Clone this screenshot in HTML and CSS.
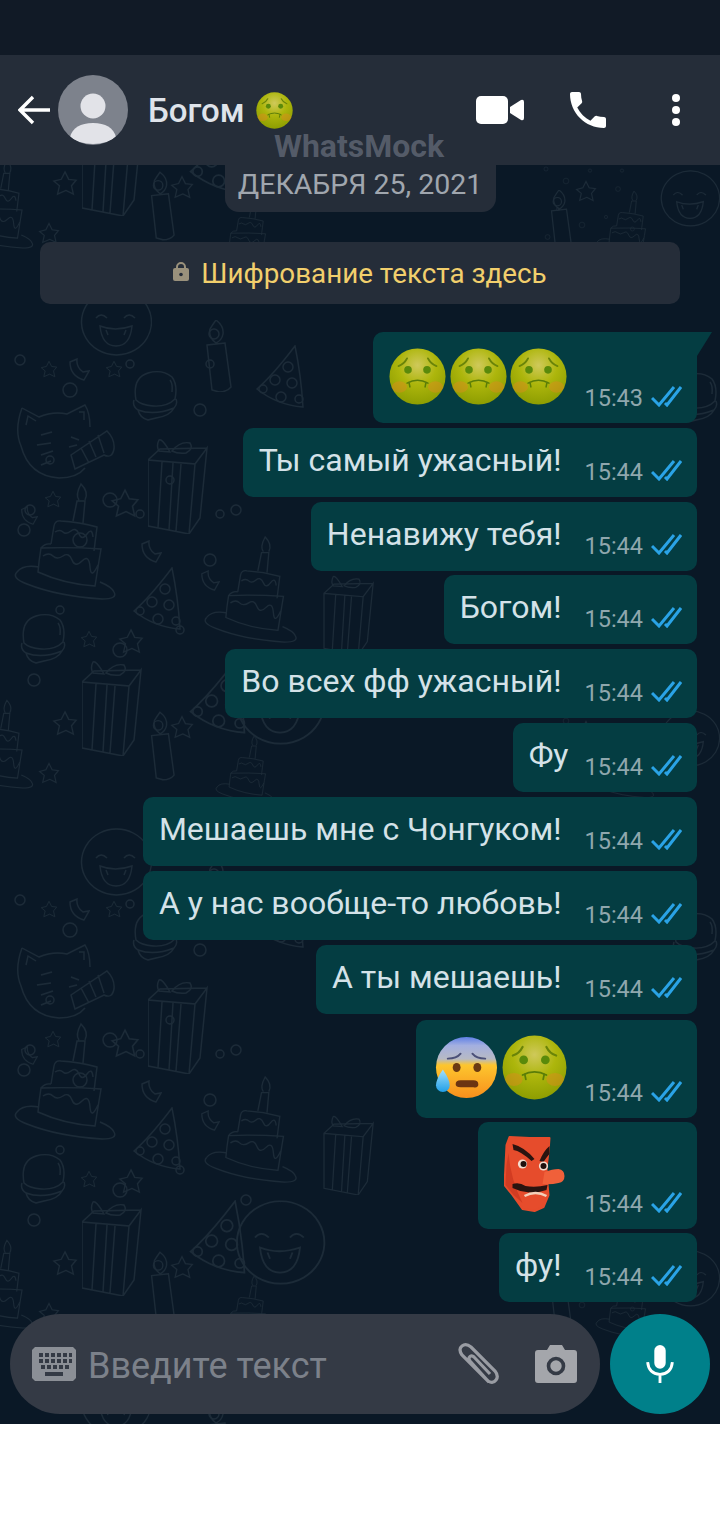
FILE: index.html
```html
<!DOCTYPE html>
<html lang="ru">
<head>
    <meta charset="UTF-8">
    <meta name="viewport" content="width=device-width, initial-scale=1.0">
    <title>WhatsMock</title>
    <link rel="stylesheet" href="styles.css">
</head>
<body>

<!-- Shared symbols -->
<svg class="defs" aria-hidden="true">
    <defs>
        <radialGradient id="sickSkin" cx="0.5" cy="0.3" r="0.75">
            <stop offset="0" stop-color="#cfc95a"/>
            <stop offset="0.45" stop-color="#adb60c"/>
            <stop offset="1" stop-color="#899a00"/>
        </radialGradient>
        <linearGradient id="fearSkin" x1="0" y1="0" x2="0" y2="1">
            <stop offset="0" stop-color="#5f80e6"/>
            <stop offset="0.14" stop-color="#a3afe0"/>
            <stop offset="0.36" stop-color="#b7bac4"/>
            <stop offset="0.46" stop-color="#fdc62e"/>
            <stop offset="1" stop-color="#f88f1c"/>
        </linearGradient>
        <linearGradient id="dropFill" x1="0" y1="0" x2="0" y2="1">
            <stop offset="0" stop-color="#a4e0fc"/>
            <stop offset="1" stop-color="#1f9fe8"/>
        </linearGradient>
        <symbol id="sick" viewBox="0 0 60 60">
            <circle cx="30" cy="30" r="29.500" fill="url(#sickSkin)"/>
            <ellipse cx="11" cy="41" rx="8" ry="6" fill="#e08a20" opacity="0.45"/>
            <ellipse cx="49" cy="41" rx="8" ry="6" fill="#e08a20" opacity="0.45"/>
            <circle cx="20" cy="23" r="4" fill="#5a8a0a"/>
            <circle cx="40" cy="23" r="4" fill="#5a8a0a"/>
            <path d="M10 19q6-2 9-8M50 19q-6-2-9-8" fill="none" stroke="#6a8408" stroke-width="2" stroke-linecap="round"/>
            <path d="M19 37q11-6 22 0M21 36l1 5M39 36l-1 5" fill="none" stroke="#5a7d08" stroke-width="1.600" stroke-linecap="round"/>
        </symbol>
        <symbol id="fear" viewBox="0 0 66 66">
            <circle cx="33" cy="33" r="31" fill="url(#fearSkin)"/>
            <path d="M14 24q9 0 13-5M52 24q-9 0-13-5" fill="none" stroke="#4b5078" stroke-width="2" stroke-linecap="round"/>
            <ellipse cx="23" cy="33" rx="4" ry="4.500" fill="#6b3a12"/>
            <ellipse cx="44" cy="33" rx="4" ry="4.500" fill="#6b3a12"/>
            <path d="M22 50q0-4 5-4h13q5 0 5 4t-5 3H27q-5 0-5-3z" fill="#6b3412"/>
            <path d="M9 35q7 10 7 16a7 7 0 0 1-14 0q0-6 7-16z" fill="url(#dropFill)"/>
        </symbol>
        <symbol id="tengu" viewBox="0 0 62 78">
            <path d="M5 2l20 1 20 0-1 14-2 16 1 16 1 11-5 12-9 4-12-2-10-14-8-10 1-20 1-20z" fill="#e64c2c" stroke="#e64c2c" stroke-width="2" stroke-linejoin="round"/>
            <path d="M4 18q2 26 14 50l-9-8-8-10 1-20z" fill="#d23c22"/>
            <path d="M40 37q8-3 14-3 6 1 6 7t-6 7q-8 2-16 1z" fill="#f0603a"/>
            <path d="M8 9q12 3 22 15l-3 2Q16 16 9 15zM45 11q-6 5-10 15l4 1q4-6 6-8z" fill="#2a1410"/>
            <circle cx="18" cy="29" r="4.600" fill="#f3ddcf"/><circle cx="19" cy="29" r="3" fill="#20110e"/>
            <circle cx="39" cy="31" r="4.600" fill="#f3ddcf"/><circle cx="39" cy="31" r="3" fill="#20110e"/>
            <path d="M8 49q7-2 13 2 10 2 22-1l-1 5q-12 4-20 2-8-1-14-4z" fill="#2a1410"/>
            <path d="M20 61q11-6 22 0" fill="none" stroke="#f3d0ba" stroke-width="2.400"/>
        </symbol>
        <symbol id="ticks" viewBox="0 0 31 21">
            <path d="M1 12l7 7L23 1M14 17l2 2L30 1" fill="none" stroke="#2aa3e6" stroke-width="3"/>
        </symbol>

        <!-- Wallpaper doodles -->
        <symbol id="dCake" viewBox="0 0 105 121">
            <path d="M4 90q-6 6 10 12 30 12 75 15 16 0 12-7-2-5-14-10M26 85Q10 82 4 90"/>
            <path d="M28 66q-2 12-3 24 26 12 57 14l4-25 2-12q-28-2-60-1zM28 66q4-5 10-4M30 74q6-4 10 0t10 0 9 4 10 1 8 6 8-2"/>
            <path d="M38 62l3-18q1-6 7-5 18 1 36 6l-3 24M42 50q5-3 8 0t8-1 8 3 8 0 6 3"/>
            <path d="M60 39l4-20h8l-2 22M66 18q-4-5 2-16 8 8 4 16"/>
        </symbol>
        <symbol id="dGift" viewBox="0 0 60 96">
            <path d="M0 22l47 4-6 70-41-8zM47 26l12-16-7 70-11 16M0 22l12-11 47-1M14 24l-4 66M25 25l-4 67M33 26l-5 67"/>
            <path d="M22 14q-8-14-11-12-3 6 0 11zM24 13q8-10 18-8 4 6-4 10-8 1-14-2z"/>
        </symbol>
        <symbol id="dHat" viewBox="0 0 50 64">
            <path d="M40 1Q18 30 2 44q20 16 46 18Q46 30 40 1z"/>
            <circle cx="33" cy="22" r="5"/><circle cx="20" cy="35" r="5"/><circle cx="37" cy="38" r="5"/><circle cx="26" cy="52" r="5"/><circle cx="44" cy="54" r="4"/><circle cx="8" cy="44" r="4"/>
        </symbol>
        <symbol id="dCat" viewBox="0 0 98 78">
            <path d="M5 5q-8 22-1 38 8 30 38 32 18 0 26-10M5 5l17 9q14-6 28-3l18-9q5 8 5 22M9 22l2-9 8 5M62 9l5 0 0 8"/>
            <path d="M24 32l11-3M20 42l14-2M24 52l12-4M24 62l10-4M54 34l8 3M52 44l8-2"/>
            <path d="M54 52l36-24q8 8 7 18-2 10-10 6L58 66zM64 45l8 15M72 38l7 16M81 32l6 18"/>
        </symbol>
        <symbol id="dBurger" viewBox="0 0 46 52">
            <path d="M4 30Q0 8 16 3q14-4 24 4 6 8 3 22-8 8-22 7-12-1-17-6zM2 30q-2 6 4 10 16 6 36-2 4-4 2-9M6 40q2 8 10 10l8-2q14-2 18-10"/>
            <path d="M38 10q3 4 2 12"/>
        </symbol>
        <symbol id="dCandle" viewBox="0 0 32 72">
            <path d="M7 25l18-2 6 44q-4 5-12 5l-7-2zM16 23q-8-6-6-14 3-5 6-9 8 6 7 14-1 6-7 9z"/><circle cx="14" cy="14" r="5"/>
        </symbol>
        <symbol id="dFace" viewBox="0 0 72 72">
            <path d="M36 1a35 33 0 1 0 1 0zM16 30q5-6 11 0M44 30q5-6 11 0M20 38q15 6 32 0-2 20-16 20T20 38zM26 42l2 5M46 42l-2 5"/>
        </symbol>
        <symbol id="dStar" viewBox="0 0 28 28">
            <path d="M14 2l4 8 8 1-5 6 2 9-8-4-9 4 2-9-6-5 8-2z"/>
        </symbol>
        <symbol id="dBit" viewBox="0 0 22 24">
            <path d="M2 4l7-3q-1 8 6 13l6-1-5 9Q2 18 2 4z"/>
        </symbol>
        <symbol id="dBits" viewBox="0 0 240 200">
            <circle cx="10" cy="10" r="5"/><circle cx="60" cy="40" r="7"/><circle cx="120" cy="14" r="4"/><circle cx="190" cy="60" r="6"/><circle cx="40" cy="110" r="4"/><circle cx="100" cy="150" r="7"/><circle cx="160" cy="130" r="4"/><circle cx="226" cy="160" r="5"/><circle cx="14" cy="180" r="6"/><circle cx="200" cy="14" r="4"/>
        </symbol>
        <pattern id="doodles" width="720" height="540" patternUnits="userSpaceOnUse">
            <g class="doodle" fill="none">
                <g id="tile" transform="translate(0 -165)">
                    <use href="#dFace" x="80" y="288" width="72" height="72"/>
                    <use href="#dCandle" x="200" y="320" width="32" height="72"/>
                    <use href="#dHat" x="255" y="345" width="50" height="64"/>
                    <use href="#dBurger" x="132" y="370" width="46" height="52"/>
                    <use href="#dCat" x="17" y="403" width="98" height="78"/>
                    <use href="#dGift" x="148" y="438" width="60" height="96"/>
                    <use href="#dCake" x="13" y="482" width="105" height="121"/>
                    <use href="#dCake" x="203" y="533" width="96" height="115"/>
                    <use href="#dHat" x="132" y="567" width="50" height="64"/>
                    <use href="#dBurger" x="20" y="613" width="46" height="52"/>
                    <use href="#dGift" x="318" y="575" width="62" height="80"/>
                    <use href="#dGift" x="82" y="660" width="60" height="96"/>
                    <use href="#dCandle" x="145" y="710" width="30" height="72"/>
                    <use href="#dCake" x="195" y="735" width="100" height="70"/>
                    <use href="#dCake" x="-45" y="690" width="80" height="110"/>
                    <use href="#dFace" x="655" y="170" width="70" height="60"/>
                    <use href="#dCandle" x="545" y="190" width="28" height="60"/>
                    <use href="#dCake" x="590" y="190" width="70" height="70"/>
                    <use href="#dHat" x="185" y="660" width="65" height="75"/>
                    <use href="#dFace" x="230" y="660" width="100" height="90"/>
                    <use href="#dBurger" x="672" y="372" width="46" height="52"/>
                    <use href="#dStar" x="38" y="762" width="22" height="22"/>
                    <use href="#dStar" x="52" y="710" width="26" height="26"/>
                    <use href="#dStar" x="170" y="175" width="24" height="24"/>
                    <use href="#dStar" x="575" y="180" width="22" height="22"/>
                    <use href="#dStar" x="40" y="360" width="18" height="18"/>
                    <use href="#dStar" x="105" y="360" width="18" height="18"/>
                    <use href="#dStar" x="110" y="488" width="30" height="30"/>
                    <use href="#dStar" x="44" y="490" width="18" height="18"/>
                    <use href="#dStar" x="80" y="630" width="18" height="18"/>
                    <use href="#dStar" x="118" y="628" width="26" height="26"/>
                    <use href="#dBit" x="68" y="358" width="22" height="24"/>
                    <use href="#dBit" x="20" y="505" width="18" height="22"/>
                    <use href="#dBit" x="140" y="540" width="22" height="24"/>
                    <use href="#dBit" x="200" y="570" width="20" height="22"/>
                    <use href="#dBits" x="10" y="350" width="240" height="200"/>
                    <use href="#dBits" x="20" y="500" width="240" height="200"/>
                    <use href="#dBits" x="470" y="165" width="240" height="80"/>
                </g>
                <use href="#tile" y="540"/>
                <use href="#tile" y="-540"/>
            </g>
        </pattern>
    </defs>
</svg>

<div class="phone">
    <div class="status-bar"></div>

    <!-- Header -->
    <div class="header">
        <svg class="back-icon" viewBox="0 0 32 30"><path d="M32 15H3M15 2L2 15l13 13" fill="none" stroke="#fff" stroke-width="3.400"/></svg>
        <div class="avatar">
            <svg viewBox="0 0 70 70"><circle cx="35" cy="31" r="12.500" fill="#e2e3e8"/><path d="M12 62q4-14 23-14t23 14q-9 7-23 7T12 62z" fill="#e2e3e8"/></svg>
        </div>
        <div class="contact-name">Богом</div>
        <svg class="name-emoji"><use href="#sick"/></svg>
        <div class="header-actions">
            <svg class="video-icon" viewBox="0 0 48 28"><rect width="32" height="28" rx="5" fill="#fff"/><path d="M34 11l11-7q3-1 3 2v16q0 3-3 2l-11-7z" fill="#fff"/></svg>
            <svg class="call-icon" viewBox="3 3 18 18"><path d="M6.620 10.790c1.440 2.830 3.760 5.140 6.590 6.590l2.200-2.200c.27-.27.67-.36 1.020-.24 1.120.37 2.330.57 3.570.57.55 0 1 .45 1 1V20c0 .55-.45 1-1 1-9.390 0-17-7.610-17-17 0-.55.45-1 1-1h3.500c.55 0 1 .45 1 1 0 1.250.2 2.450.57 3.570.11.35.03.74-.25 1.020l-2.200 2.200z" fill="#fff"/></svg>
            <svg class="menu-icon" viewBox="0 0 8 32"><circle cx="4" cy="4" r="4" fill="#fff"/><circle cx="4" cy="16" r="4" fill="#fff"/><circle cx="4" cy="28" r="4" fill="#fff"/></svg>
        </div>
    </div>
    <div class="watermark">WhatsMock</div>

    <!-- Chat -->
    <div class="chat">
        <svg class="wallpaper"><rect width="720" height="1260" fill="url(#doodles)"/></svg>

        <div class="date-chip">ДЕКАБРЯ 25, 2021</div>
        <div class="notice">
            <svg class="lock-icon" viewBox="0 0 16 20"><path d="M3 8V6a5 5 0 0 1 10 0v2h-2V6a3 3 0 0 0-6 0v2z" fill="#9a917c"/><rect y="7" width="16" height="13" rx="2" fill="#9a917c"/><circle cx="8" cy="13.500" r="1.800" fill="#252d39"/></svg>
            <span>Шифрование текста здесь</span>
        </div>

        <div class="msg msg-first msg-emoji">
            <div class="emoji-row"><svg class="emoji-s"><use href="#sick"/></svg><svg class="emoji-s"><use href="#sick"/></svg><svg class="emoji-s"><use href="#sick"/></svg></div>
            <div class="meta"><span class="time">15:43</span><svg class="ticks"><use href="#ticks"/></svg></div>
        </div>
        <div class="msg"><div class="msg-text">Ты самый ужасный!</div><div class="meta"><span class="time">15:44</span><svg class="ticks"><use href="#ticks"/></svg></div></div>
        <div class="msg"><div class="msg-text">Ненавижу тебя!</div><div class="meta"><span class="time">15:44</span><svg class="ticks"><use href="#ticks"/></svg></div></div>
        <div class="msg msg-tight"><div class="msg-text">Богом!</div><div class="meta"><span class="time">15:44</span><svg class="ticks"><use href="#ticks"/></svg></div></div>
        <div class="msg"><div class="msg-text">Во всех фф ужасный!</div><div class="meta"><span class="time">15:44</span><svg class="ticks"><use href="#ticks"/></svg></div></div>
        <div class="msg msg-short"><div class="msg-text">Фу</div><div class="meta"><span class="time">15:44</span><svg class="ticks"><use href="#ticks"/></svg></div></div>
        <div class="msg"><div class="msg-text">Мешаешь мне с Чонгуком!</div><div class="meta"><span class="time">15:44</span><svg class="ticks"><use href="#ticks"/></svg></div></div>
        <div class="msg"><div class="msg-text">А у нас вообще-то любовь!</div><div class="meta"><span class="time">15:44</span><svg class="ticks"><use href="#ticks"/></svg></div></div>
        <div class="msg"><div class="msg-text">А ты мешаешь!</div><div class="meta"><span class="time">15:44</span><svg class="ticks"><use href="#ticks"/></svg></div></div>
        <div class="msg msg-emoji msg-pair">
            <div class="emoji-row"><svg class="emoji-l"><use href="#fear"/></svg><svg class="emoji-l"><use href="#sick"/></svg></div>
            <div class="meta"><span class="time">15:44</span><svg class="ticks"><use href="#ticks"/></svg></div>
        </div>
        <div class="msg msg-tight msg-emoji msg-mask">
            <div class="emoji-row"><svg class="emoji-mask"><use href="#tengu"/></svg></div>
            <div class="meta"><span class="time">15:44</span><svg class="ticks"><use href="#ticks"/></svg></div>
        </div>
        <div class="msg msg-tight"><div class="msg-text">фу!</div><div class="meta"><span class="time">15:44</span><svg class="ticks"><use href="#ticks"/></svg></div></div>
    </div>

    <!-- Composer -->
    <div class="composer">
        <div class="input-pill">
            <svg class="keyboard-icon" viewBox="0 0 44 34">
                <path d="M3 0h38l3 3v28l-3 3H3l-3-3V3z" fill="#8b8f96"/>
                <path d="M7 6h4v4H7zM13 6h4v4h-4zM19 6h4v4h-4zM25 6h4v4h-4zM31 6h4v4h-4zM37 6h3v4h-3zM7 12h4v4H7zM13 12h4v4h-4zM19 12h4v4h-4zM25 12h4v4h-4zM31 12h4v4h-4zM37 12h3v4h-3zM9 18h4v4H9zM15 18h4v4h-4zM21 18h4v4h-4zM27 18h4v4h-4zM33 18h4v4h-4zM13 25h18v4H13z" fill="#343a45"/>
            </svg>
            <div class="placeholder">Введите текст</div>
            <svg class="clip-icon" viewBox="0 0 42 42"><path d="M32 39L5 12q-4-6 0-9t9 1l24 24q4 5 1 9t-8 1L13 18q-2-3 0-4.500t4 .5l16 17" fill="none" stroke="#999ca3" stroke-width="3.200"/></svg>
            <svg class="camera-icon" viewBox="0 0 42 38"><path d="M3 5h9l3-5h12l3 5h9q3 0 3 3v27q0 3-3 3H3q-3 0-3-3V8q0-3 3-3z" fill="#a4a6ab"/><circle cx="21" cy="21" r="7.500" fill="none" stroke="#343a45" stroke-width="3.600"/></svg>
        </div>
        <div class="mic-button">
            <svg viewBox="0 0 28 40"><rect x="8" width="12" height="25" rx="6" fill="#fff"/><path d="M1 18q1 12 13 13 12-1 13-13M14 31v9" fill="none" stroke="#fff" stroke-width="3"/></svg>
        </div>
    </div>
</div>

</body>
</html>
```

FILE: styles.css
```css
body {
    font-family: Roboto, "Noto Sans", sans-serif;
    margin: 0;
    padding: 0;
    background-color: #fff;
}
.defs {
    position: absolute;
    width: 0;
    height: 0;
}
.doodle {
    stroke: #1c2b38;
    stroke-width: 1.4;
}
.phone {
    position: relative;
    width: 720px;
    height: 1424px;
    display: flex;
    flex-direction: column;
    background-color: #0a1826;
    overflow: hidden;
}
.status-bar {
    height: 55px;
    background-color: #111a26;
}

/* Header */
.header {
    height: 110px;
    display: flex;
    align-items: center;
    padding-left: 18px;
    background-color: #252d39;
}
.back-icon {
    width: 32px;
    height: 30px;
}
.avatar {
    width: 70px;
    height: 70px;
    margin-left: 8px;
    border-radius: 50%;
    background-color: #7d828c;
    overflow: hidden;
}
.avatar svg {
    display: block;
}
.contact-name {
    margin-left: 20px;
    font-size: 33px;
    font-weight: 500;
    color: #dfe3ea;
}
.name-emoji {
    width: 37px;
    height: 37px;
    margin-left: 11px;
}
.header-actions {
    display: flex;
    align-items: center;
    margin-left: auto;
}
.video-icon {
    width: 48px;
    height: 28px;
}
.call-icon {
    width: 36px;
    height: 36px;
    margin-left: 46px;
}
.menu-icon {
    width: 8px;
    height: 32px;
    margin: 0 40px 0 66px;
}
.watermark {
    position: absolute;
    top: 127px;
    left: -1px;
    width: 100%;
    z-index: 2;
    text-align: center;
    font-size: 32px;
    font-weight: 700;
    color: rgba(126, 132, 146, 0.55);
}

/* Chat */
.chat {
    position: relative;
    flex: 1;
    display: flex;
    flex-direction: column;
    overflow: hidden;
}
.wallpaper {
    position: absolute;
    top: 0;
    left: 0;
    width: 720px;
    height: 1260px;
}
.date-chip {
    position: relative;
    align-self: center;
    height: 47px;
    width: 271px;
    line-height: 40px;
    text-align: center;
    font-size: 28.5px;
    color: #a0a6ae;
    background-color: #252d39;
    border-radius: 0 0 14px 14px;
}
.notice {
    position: relative;
    height: 62px;
    margin: 30px 40px 0;
    display: flex;
    align-items: center;
    justify-content: center;
    font-size: 27.8px;
    color: #f2cf6c;
    background-color: #252d39;
    border-radius: 10px;
}
.lock-icon {
    width: 16px;
    height: 20px;
    margin-right: 12px;
    margin-bottom: 4px;
}
.msg {
    position: relative;
    align-self: flex-end;
    display: flex;
    margin: 5px 23px 0 0;
    padding: 13px 15px 10px 16px;
    background-color: #043d42;
    border-radius: 10px;
}
.msg-tight {
    margin-top: 4px;
}
.msg-first {
    margin-top: 28px;
    border-top-right-radius: 0;
}
.msg-first::after {
    content: "";
    position: absolute;
    top: 0;
    left: 100%;
    width: 15px;
    height: 24px;
    background-color: #043d42;
    clip-path: polygon(0 0, 100% 0, 0 100%);
}
.msg-text {
    font-size: 32px;
    line-height: 38px;
    color: #d4e2e8;
}
.meta {
    display: flex;
    align-items: center;
    align-self: flex-end;
    height: 30px;
    margin-left: 23px;
    margin-top: 16px;
}
.msg-short .meta {
    margin-left: 16px;
}
.time {
    font-size: 23.5px;
    line-height: 30px;
    color: #8fa7ad;
}
.ticks {
    width: 31px;
    height: 21px;
    margin: 0 0 4px 8px;
}
.msg-emoji .meta {
    margin-left: 17px;
}
.emoji-row {
    display: flex;
    gap: 3px;
}
.msg-first .emoji-row {
    margin: 3px 0 8px;
    gap: 3.5px;
}
.emoji-s {
    width: 57px;
    height: 57px;
}
.msg-pair {
    margin-top: 6px;
    padding-left: 18px;
}
.msg-pair .emoji-row {
    margin: 2px 0 8px;
}
.emoji-l {
    width: 65px;
    height: 65px;
}
.msg-mask {
    padding-left: 26px;
}
.msg-mask .emoji-row {
    margin-bottom: 6px;
}
.emoji-mask {
    width: 63px;
    height: 78px;
}

/* Composer */
.composer {
    position: absolute;
    left: 10px;
    bottom: 10px;
    display: flex;
    gap: 10px;
}
.input-pill {
    width: 590px;
    height: 100px;
    display: flex;
    align-items: center;
    padding-left: 22px;
    box-sizing: border-box;
    background-color: #343a45;
    border-radius: 50px;
}
.keyboard-icon {
    width: 44px;
    height: 34px;
}
.placeholder {
    margin: 4px 0 0 12px;
    font-size: 36px;
    color: #7c818a;
}
.clip-icon {
    width: 42px;
    height: 42px;
    margin-left: auto;
}
.camera-icon {
    width: 42px;
    height: 38px;
    margin: 0 23px 0 36px;
}
.mic-button {
    width: 100px;
    height: 100px;
    display: flex;
    align-items: center;
    justify-content: center;
    border-radius: 50%;
    background-color: #00808a;
}
.mic-button svg {
    width: 28px;
    height: 38px;
}
```
